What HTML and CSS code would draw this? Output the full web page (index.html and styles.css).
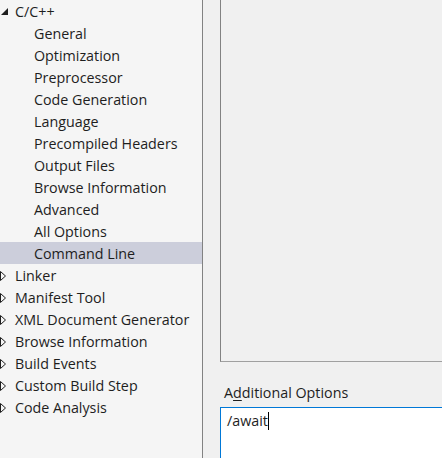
FILE: index.html
```html
<!DOCTYPE html>
<html>
<head>
<meta charset="utf-8">
<link rel="stylesheet" href="styles.css">
</head>
<body>
<div class="page">
  <div class="tree">
    <div class="row top"><span class="exp"><svg width="7" height="7" viewBox="0 0 7 7"><polygon points="7,0 7,7 0,7" fill="#1e1e1e"/></svg></span><span>C/C++</span></div>
    <div class="row child">General</div>
    <div class="row child">Optimization</div>
    <div class="row child">Preprocessor</div>
    <div class="row child">Code Generation</div>
    <div class="row child">Language</div>
    <div class="row child">Precompiled Headers</div>
    <div class="row child">Output Files</div>
    <div class="row child">Browse Information</div>
    <div class="row child">Advanced</div>
    <div class="row child">All Options</div>
    <div class="row child sel">Command Line</div>
    <div class="row top"><span class="exp"><svg width="6" height="10" viewBox="0 0 6 10"><polygon points="0.5,0.5 5.5,5 0.5,9.5" fill="none" stroke="#1e1e1e" stroke-width="1"/></svg></span><span>Linker</span></div>
    <div class="row top"><span class="exp"><svg width="6" height="10" viewBox="0 0 6 10"><polygon points="0.5,0.5 5.5,5 0.5,9.5" fill="none" stroke="#1e1e1e" stroke-width="1"/></svg></span><span>Manifest Tool</span></div>
    <div class="row top"><span class="exp"><svg width="6" height="10" viewBox="0 0 6 10"><polygon points="0.5,0.5 5.5,5 0.5,9.5" fill="none" stroke="#1e1e1e" stroke-width="1"/></svg></span><span>XML Document Generator</span></div>
    <div class="row top"><span class="exp"><svg width="6" height="10" viewBox="0 0 6 10"><polygon points="0.5,0.5 5.5,5 0.5,9.5" fill="none" stroke="#1e1e1e" stroke-width="1"/></svg></span><span>Browse Information</span></div>
    <div class="row top"><span class="exp"><svg width="6" height="10" viewBox="0 0 6 10"><polygon points="0.5,0.5 5.5,5 0.5,9.5" fill="none" stroke="#1e1e1e" stroke-width="1"/></svg></span><span>Build Events</span></div>
    <div class="row top"><span class="exp"><svg width="6" height="10" viewBox="0 0 6 10"><polygon points="0.5,0.5 5.5,5 0.5,9.5" fill="none" stroke="#1e1e1e" stroke-width="1"/></svg></span><span>Custom Build Step</span></div>
    <div class="row top"><span class="exp"><svg width="6" height="10" viewBox="0 0 6 10"><polygon points="0.5,0.5 5.5,5 0.5,9.5" fill="none" stroke="#1e1e1e" stroke-width="1"/></svg></span><span>Code Analysis</span></div>
  </div>
  <div class="main">
    <div class="options"></div>
    <div class="label">A<u>d</u>ditional Options</div>
    <div class="input"><span>/await</span><span class="caret"></span></div>
  </div>
</div>
</body>
</html>
```
FILE: styles.css
```css
html, body {
  margin: 0;
  padding: 0;
  width: 442px;
  height: 458px;
  overflow: hidden;
  background: #f0f0f0;
}
.page {
  display: flex;
  width: 442px;
  height: 458px;
  font-family: "Open Sans", "Noto Sans", sans-serif;
  font-size: 14.3px;
  color: #1e1e1e;
}
.tree {
  width: 202px;
  flex: none;
  background: #f5f5f5;
  border-right: 1px solid #828282;
}
.row {
  height: 22px;
  line-height: 22px;
  display: flex;
  align-items: center;
  white-space: nowrap;
  box-sizing: border-box;
  padding-top: 1px;
}
.row.child {
  padding-left: 34px;
}
.row.top .exp {
  width: 15px;
  flex: none;
  display: flex;
  align-items: center;
}
.row:first-child .exp {
  padding-left: 1px;
  width: 14px;
}
.row.sel {
  background: #cccedb;
}
.main {
  flex: 1;
  display: flex;
  flex-direction: column;
  padding-left: 17px;
  min-width: 0;
}
.options {
  height: 362px;
  flex: none;
  border-left: 1px solid #828282;
  border-bottom: 1px solid #a0a0a0;
  box-sizing: border-box;
  margin-right: -4px;
}
.label {
  height: 45px;
  flex: none;
  padding-left: 4px;
  padding-top: 21px;
  box-sizing: border-box;
  line-height: 20px;
  white-space: nowrap;
}
.label u {
  text-underline-offset: 2px;
}
.input {
  flex: 1;
  background: #fff;
  border-top: 1px solid #0078d7;
  border-left: 1px solid #0078d7;
  padding-left: 6px;
  padding-top: 3px;
  line-height: 20px;
  display: flex;
  align-items: flex-start;
}
.caret {
  display: inline-block;
  width: 1px;
  height: 18px;
  background: #000;
  margin-top: 1px;
}
```
